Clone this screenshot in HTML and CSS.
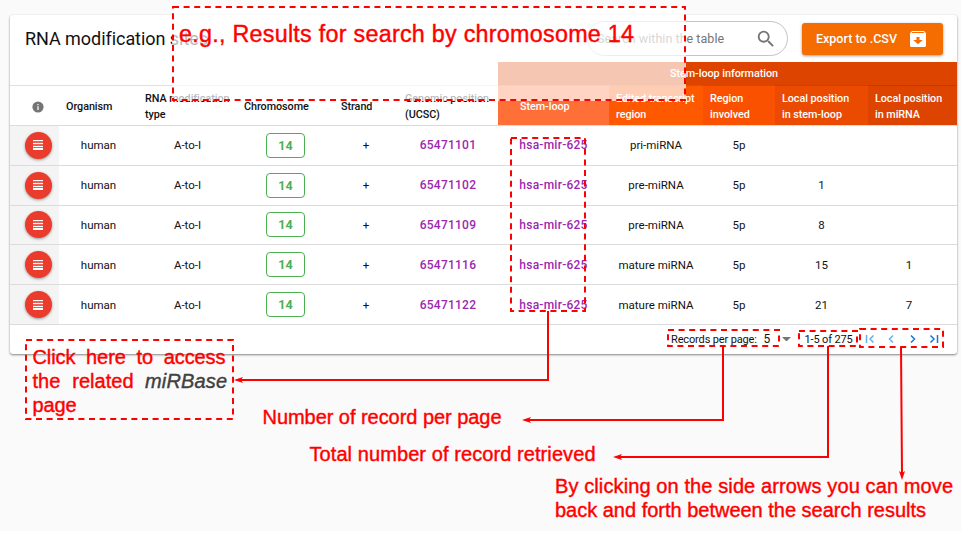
FILE: index.html
```html
<!DOCTYPE html>
<html lang="en">
<head>
<meta charset="utf-8">
<title>RNA modification sites</title>
<link rel="stylesheet" href="styles.css">
</head>
<body>
<div class="page">
  <main class="card">
    <header class="toolbar">
      <h1 class="title">RNA modification sites</h1>
      <div class="search">
        <span>Search within the table</span>
        <svg class="search-icon" viewBox="0 0 24 24"><path fill="#757575" d="M15.5 14h-.79l-.28-.27A6.471 6.471 0 0 0 16 9.500 6.500 6.500 0 1 0 9.500 16c1.610 0 3.090-.59 4.230-1.570l.27.28v.79l5 4.990L20.490 19l-4.990-5zm-6 0C7.010 14 5 11.990 5 9.500S7.010 5 9.500 5 14 7.010 14 9.500 11.990 14 9.500 14z"/></svg>
      </div>
      <button class="export"><span>Export to .CSV</span>
        <svg class="export-icon" viewBox="0 0 16 16"><path fill="#fff" fill-rule="evenodd" d="M2 0h12l2 2.300V14.500Q16 16 14.500 16H1.500Q0 16 0 14.500V2.300zM1.600 2h12.800l-.7-1H2.300zM6.500 6v3H3.300L8 13.300 12.700 9H9.500V6z"/></svg>
      </button>
    </header>
    <div class="row group"><div class="group-label"><span>Stem-loop information</span></div></div>
    <div class="row head">
      <div class="info"><svg viewBox="0 0 12 12"><circle cx="6" cy="6" r="5.600" fill="#757575"/><path d="M5.400 3h1.200v1.200H5.400zM5.400 5.300h1.200V9H5.400z" fill="#fff"/></svg></div>
      <div>Organism</div>
      <div>RNA modification<br>type</div>
      <div>Chromosome</div>
      <div>Strand</div>
      <div>Genomic position<br>(UCSC)</div>
      <div class="s1">Stem-loop</div>
      <div class="s2">Edited transcript<br>region</div>
      <div class="s3">Region<br>involved</div>
      <div class="s4">Local position<br>in stem-loop</div>
      <div class="s5">Local position<br>in miRNA</div>
    </div>
    <div class="rows">
      <div class="row body"><div class="act"><i class="fab"><b></b></i></div><div>human</div><div>A-to-I</div><div><span class="chip">14</span></div><div>+</div><div class="link">65471101</div><div class="link">hsa-mir-625</div><div>pri-miRNA</div><div>5p</div><div></div><div class="last"></div></div>
      <div class="row body"><div class="act"><i class="fab"><b></b></i></div><div>human</div><div>A-to-I</div><div><span class="chip">14</span></div><div>+</div><div class="link">65471102</div><div class="link">hsa-mir-625</div><div>pre-miRNA</div><div>5p</div><div>1</div><div class="last"></div></div>
      <div class="row body"><div class="act"><i class="fab"><b></b></i></div><div>human</div><div>A-to-I</div><div><span class="chip">14</span></div><div>+</div><div class="link">65471109</div><div class="link">hsa-mir-625</div><div>pre-miRNA</div><div>5p</div><div>8</div><div class="last"></div></div>
      <div class="row body"><div class="act"><i class="fab"><b></b></i></div><div>human</div><div>A-to-I</div><div><span class="chip">14</span></div><div>+</div><div class="link">65471116</div><div class="link">hsa-mir-625</div><div>mature miRNA</div><div>5p</div><div>15</div><div class="last">1</div></div>
      <div class="row body"><div class="act"><i class="fab"><b></b></i></div><div>human</div><div>A-to-I</div><div><span class="chip">14</span></div><div>+</div><div class="link">65471122</div><div class="link">hsa-mir-625</div><div>mature miRNA</div><div>5p</div><div>21</div><div class="last">7</div></div>
    </div>
    <footer class="pager">
      <span class="per">Records per page:</span>
      <span class="size">5</span>
      <svg class="caret" viewBox="0 0 8 4"><path d="M0 0h8L4 4z" fill="#757575"/></svg>
      <span class="range">1-5 of 275</span>
      <svg class="nav" viewBox="0 0 74 10" fill="none" stroke-width="1.500"><g stroke="#64b0ee"><path d="M1.500 1v8M8.500 1.500L5 5l3.500 3.500M28 1.500L24.500 5 28 8.500"/></g><g stroke="#1976d2"><path d="M46 1.500L49.500 5 46 8.500M65.500 1.500L69 5l-3.500 3.500M72.500 1v8"/></g></svg>
    </footer>
  </main>
</div>

<svg class="notes" viewBox="0 0 966 534">
  <rect class="veil" x="172" y="6" width="514" height="95"/>
  <g class="dash">
    <path d="M173 7H685V100H173Z"/>
    <path d="M511 138H585V311H511Z"/>
    <path d="M26 340H233V419H26Z"/>
    <path d="M668 330H779V346H668Z"/>
    <path d="M799 331H857V346H799Z"/>
    <path d="M860 329H943V347H860Z"/>
  </g>
  <g class="wire">
    <path d="M548 311V380H238M723 346V420H528M828 346V457H619M901 347L902 475"/>
  </g>
  <g class="tip">
    <path d="M234 380l9-3-2 3 2 3zM522 420l9-3-2 3 2 3zM613 457l9-3-2 3 2 3zM902 480l-3-9 3 2 3-2z"/>
  </g>
  <g class="note">
    <text class="big" x="179" y="41.500" textLength="455">e.g., Results for search by chromosome 14</text>
    <text x="32.500" y="364" textLength="193" word-spacing="5.400">Click here to access</text>
    <text x="32.500" y="388" textLength="101" word-spacing="6.400">the related</text>
    <text class="term" x="145" y="388" textLength="82">miRBase</text>
    <text x="32.500" y="411.500" textLength="44">page</text>
    <text x="262.500" y="424" textLength="239">Number of record per page</text>
    <text x="309.500" y="461" textLength="286">Total number of record retrieved</text>
    <text x="555" y="493" textLength="398">By clicking on the side arrows you can move</text>
    <text x="555" y="517" textLength="371">back and forth between the search results</text>
  </g>
</svg>
</body>
</html>
```

FILE: styles.css
```css
* { box-sizing: border-box; }
body { margin: 0; width: 966px; height: 534px; overflow: hidden; background: #fff; font-family: Roboto, sans-serif; color: #111; position: relative; }
.page { width: 961px; height: 531px; background: #fafafa; padding: 15px 0 0 10px; }
.card { width: 947px; height: 338.500px; background: #fff; border-radius: 3px; box-shadow: 0 1px 2px rgba(0,0,0,.36), 0 1px 3px rgba(0,0,0,.15); display: flex; flex-direction: column; }
.toolbar { height: 47px; display: flex; align-items: center; padding: 0 14px 0 15px; flex: none; }
.title { margin: 0; font-size: 18px; font-weight: 400; letter-spacing: -.05px; flex: 1; }
.search { width: 201px; height: 35px; border: 1px solid #c4c4c4; border-radius: 18px; display: flex; align-items: center; justify-content: space-between; padding: 0 10px 0 9px; font-size: 12.500px; letter-spacing: .04px; color: #757575; margin-right: 14px; }
.search-icon { width: 22px; height: 22px; }
.export { width: 141px; height: 32px; border: 0; border-radius: 3px; background: #f56c00; color: #fff; box-shadow: 0 1px 3px rgba(0,0,0,.4); display: flex; align-items: center; justify-content: space-between; padding: 0 17px 0 14px; font: 500 12.500px Roboto, sans-serif; letter-spacing: 0; }
.export-icon { width: 16px; height: 16px; }
.row { display: grid; grid-template-columns: 49px 79px 99px 97px 64px 100px 111px 94px 72px 93px 89px; flex: none; }
.group { height: 23px; }
.group-label { grid-column: 7 / -1; background: #dd4400; color: #fff; font-size: 10.800px; font-weight: 500; letter-spacing: -.04px; display: flex; align-items: center; justify-content: center; padding-right: 7px; }
.head { height: 40px; box-shadow: inset 0 1px #e0e0e0; font-size: 10.800px; font-weight: 500; letter-spacing: -.05px; line-height: 16px; white-space: nowrap; }
.head > div { display: flex; flex-direction: column; justify-content: center; padding: 4px 0 0 7px; }
.head .info { padding: 3px 0 0 22px; }
.info svg { width: 12px; height: 12px; }
.head .s1 { padding-left: 22px; background: #ff7038; color: #fff; }
.s1, .s2, .s3, .s4, .s5 { box-shadow: inset 0 1px rgba(0,0,0,.12); }
.s2 { background: #ff5900; color: #fff; }
.s3 { background: #fa5100; color: #fff; }
.s4 { background: #eb4b00; color: #fff; }
.s5 { background: #dd4400; color: #fff; }
.rows { display: grid; grid-template-rows: repeat(5, 39.800px); flex: none; }
.body { border-top: 1px solid #dcdcdc; font-size: 11.500px; }
.body > div { display: flex; align-items: center; justify-content: center; white-space: nowrap; }
.body .act { background: #f4f4f4; padding-left: 7px; }
.body .last { padding-right: 7px; }
.body .link { font-size: 12px; font-weight: 500; color: #9c27b0; letter-spacing: .24px; }
.fab { width: 27px; height: 27px; border-radius: 50%; background: #ea3b2c; box-shadow: 0 1px 3px rgba(0,0,0,.4); display: grid; place-items: center; }
.fab b { width: 10px; height: 10px; background: repeating-linear-gradient(#fff 0 1.300px, #ee6256 1.300px 2.800px); }
.chip { width: 39px; height: 25px; border: 1px solid #4caf50; border-radius: 4px; color: #4caf50; font-weight: 700; font-size: 12.500px; letter-spacing: .2px; display: flex; align-items: center; justify-content: center; }
.pager { height: 29.500px; border-top: 1px solid #dcdcdc; display: flex; align-items: center; padding-left: 661px; font-size: 11px; letter-spacing: -.14px; white-space: nowrap; }
.per { width: 92.500px; }
.size { width: 18.500px; font-size: 12px; }
.caret { width: 9px; height: 4.500px; }
.range { margin-left: 13.500px; width: 60.500px; }
.nav { width: 74px; height: 10px; }
.notes { position: absolute; left: 0; top: 0; width: 966px; height: 534px; }
.veil { fill: #fff; fill-opacity: .7; }
.dash { fill: none; stroke: #f00; stroke-width: 2; stroke-dasharray: 6 4.600; }
.wire { fill: none; stroke: #f00; stroke-width: 2; }
.tip { fill: #f00; }
.note { font-family: "Liberation Sans", Arial, sans-serif; font-size: 20px; fill: #f00; stroke: #f00; stroke-width: .4px; }
.note .big { font-size: 23.300px; }
.note .term { font-style: italic; fill: #404040; stroke: #404040; }
```
